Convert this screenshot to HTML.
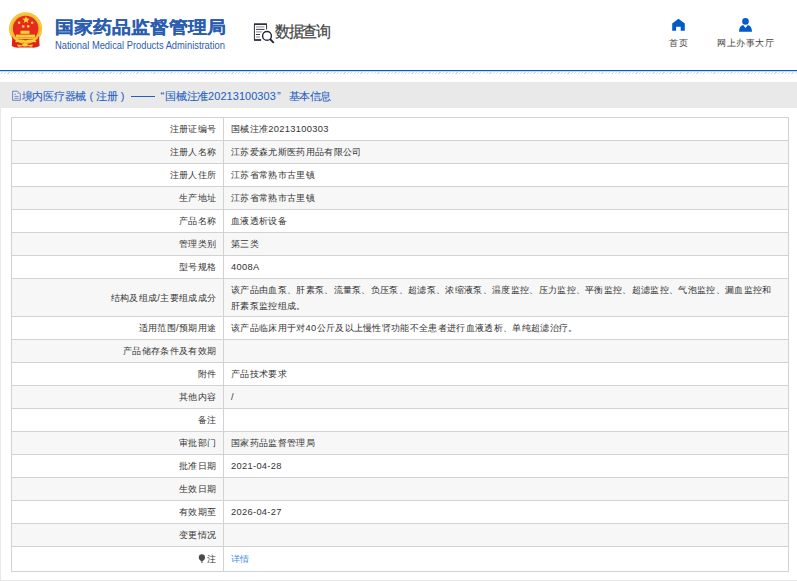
<!DOCTYPE html>
<html><head><meta charset="utf-8">
<style>
*{margin:0;padding:0;box-sizing:border-box}
html,body{width:797px;height:581px;overflow:hidden;background:#fff;font-family:"Liberation Sans",sans-serif;color:#333}
.abs{position:absolute}
#hdr{position:absolute;left:0;top:0;width:797px;height:70px;background:#fff}
#title{left:54.5px;top:16.5px;font-size:19px;font-weight:700;letter-spacing:0px;transform:scaleY(0.9);transform-origin:0 0;-webkit-text-stroke:0.15px #2a5db0;color:#2a5db0;white-space:nowrap;letter-spacing:0px;line-height:24px}
#eng{left:54.5px;top:38.5px;font-size:10.5px;transform:scaleX(0.89);color:#2a5db0;white-space:nowrap;line-height:12px;transform-origin:0 0}
#sj{left:275px;top:19.5px;font-size:15px;letter-spacing:-1.3px;color:#444;-webkit-text-stroke:0.2px #444;transform:scaleY(1.06);transform-origin:0 0;white-space:nowrap;line-height:22px}
.nav{font-size:9.3px;letter-spacing:0.5px;color:#444;white-space:nowrap;line-height:12px}
#bline{left:0;top:70px;width:797px;height:1px;background:#005ac8;box-shadow:0 0.6px 0 rgba(0,90,200,0.35)}
#hatch{left:0;top:72px;width:797px;height:2px;background:repeating-linear-gradient(135deg,#fff 0 1.5px,#dcdcdc 1.5px 2.4px)}
#graybg{left:0;top:82px;width:797px;height:499px;background:#e9e9e9}
.c{position:absolute;top:0}
#crumb{left:21.5px;-webkit-text-stroke:0.08px #1f5fc6;top:88px;font-size:10.9px;color:#1f5fc6;white-space:nowrap;line-height:16px}
#box{left:1px;top:108px;width:796px;height:472px;background:#fff}
table{position:absolute;left:11px;top:117px;width:778px;border-collapse:collapse;font-size:9.3px;color:#333}
td{border:1px solid #d2d2d2;height:23px;padding:2px 7px 0 7px;line-height:15.6px;white-space:nowrap;letter-spacing:0.32px}
td.l{width:212px;text-align:right;padding-right:6.8px}
tr:nth-child(even) td{background:#f7f7f7}
</style></head><body>
<div id="hdr">
  <svg class="abs" style="left:6px;top:10px" width="40" height="40" viewBox="0 0 40 40">
    <circle cx="19.6" cy="18.9" r="16.6" fill="#f1bf2e"/>
    <circle cx="19.6" cy="18.9" r="15.6" fill="none" stroke="#f6d04a" stroke-width="1"/>
    <circle cx="19.65" cy="18.6" r="12.8" fill="#e8291f"/>
    <path d="M6.3 26 Q9 33 19.6 34 Q30 33 33 26 L33.6 36 Q30 38 26 37.6 L13 37.6 Q9 38 5.8 36Z" fill="#dc2418"/>
    <g fill="#f8d23a">
      <polygon points="20,6.2 21.05,8.6 23.6,8.75 21.7,10.4 22.3,12.9 20,11.5 17.7,12.9 18.3,10.4 16.4,8.75 18.95,8.6"/>
      <circle cx="13.1" cy="12.7" r="1.3"/><circle cx="26.2" cy="12.7" r="1.3"/>
      <circle cx="17.2" cy="16.4" r="1.3"/><circle cx="22.2" cy="16.4" r="1.3"/>
      <rect x="14.5" y="20.7" width="9" height="3.1"/>
      <rect x="10" y="24.6" width="19" height="2.9"/>
      <rect x="7.5" y="27.5" width="24" height="1.5" fill="#f4c52c"/>
      <path d="M9 31 Q14 28.5 19.6 30.5 Q25 28.5 30.5 31 L29.5 32.5 Q25 30.5 19.6 32.3 Q14 30.5 10 32.5Z"/>
      <ellipse cx="19" cy="35" rx="3" ry="1.6"/>
      <path d="M11 34.5 L16 35.3 L16 36.3 L12 36.8Z M27 34.5 L22 35.3 L22 36.3 L26 36.8Z"/>
    </g>
  </svg>
  <div id="title" class="abs">国家药品监督管理局</div>
  <div id="eng" class="abs">National Medical Products Administration</div>
  <svg class="abs" style="left:250px;top:20px" width="28" height="26" viewBox="0 0 28 26">
    <path d="M11.2 20 H4.4 V4.2 H16.6 V9.4" fill="none" stroke="#2e2e3e" stroke-width="1"/>
    <rect x="4" y="3.4" width="13" height="1.6" fill="#2e2e3e"/>
    <rect x="4" y="19.2" width="7" height="1.6" fill="#2e2e3e"/>
    <rect x="6" y="6.4" width="8.5" height="1" fill="#8a8a96"/>
    <rect x="6" y="8.9" width="8.5" height="1" fill="#3a3a4a"/>
    <rect x="6" y="11.4" width="6" height="1" fill="#8a8a96"/>
    <rect x="6" y="14" width="4" height="1" fill="#3a3a4a"/>
    <rect x="6" y="16.5" width="4" height="1" fill="#8a8a96"/>
    <circle cx="17" cy="15.9" r="4.4" fill="#fff" stroke="#262636" stroke-width="1.4"/>
    <line x1="20" y1="19" x2="23.8" y2="22.8" stroke="#262636" stroke-width="1.9"/>
  </svg>
  <div id="sj" class="abs">数据查询</div>
  <svg class="abs" style="left:672px;top:18px" width="13" height="13" viewBox="0 0 13 13">
    <path d="M6.5 0.8 L12.8 5.5 V12.8 H8.7 V8.8 H4.1 V12.8 H0.2 V5.5Z" fill="#005ac8"/>
  </svg>
  <div class="abs nav" style="left:669px;top:37px">首页</div>
  <svg class="abs" style="left:738px;top:17px" width="15" height="15" viewBox="0 0 15 15">
    <circle cx="7.5" cy="4.4" r="3.3" fill="#005ac8"/>
    <path d="M1 14.8 Q1.2 8.6 5.2 8 L7.5 11 L9.8 8 Q13.8 8.6 14 14.8Z" fill="#005ac8"/>
  </svg>
  <div class="abs nav" style="left:717px;top:37px">网上办事大厅</div>
</div>
<div id="bline" class="abs"></div>
<div id="hatch" class="abs"></div>
<div id="graybg" class="abs"></div>
<svg class="abs" style="left:11px;top:90px" width="12" height="13" viewBox="0 0 12 13">
  <path d="M1.6 1.2 H6.6 L9.3 3.9 V10.3 H1.6Z" fill="none" stroke="#4a6cc8" stroke-width="0.8"/>
  <circle cx="7" cy="3.4" r="0.7" fill="#8aa0e0"/>
  <line x1="3.4" y1="4.3" x2="5" y2="4.3" stroke="#4a6cc8" stroke-width="0.7"/>
  <line x1="3.4" y1="6.4" x2="7.6" y2="6.4" stroke="#4a6cc8" stroke-width="0.7"/>
  <line x1="3.4" y1="8.3" x2="7.6" y2="8.3" stroke="#4a6cc8" stroke-width="0.7"/>
</svg>
<div id="crumb" class="abs"><span class="c" style="left:0;letter-spacing:-0.25px">境内医疗器械</span><span class="c" style="left:68px">(</span><span class="c" style="left:74.3px;letter-spacing:-0.25px">注册</span><span class="c" style="left:99.3px">)</span><span class="c" style="left:109.8px;top:7.6px;width:23.5px;height:1px;background:#1f5fc6"></span><span class="c" style="left:139px">“</span><span class="c" style="left:143.8px;letter-spacing:-0.35px">国械注准</span><span class="c" style="left:186.6px;letter-spacing:0.1px">20213100303</span><span class="c" style="left:255.5px">”</span><span class="c" style="left:267.2px;letter-spacing:-0.4px">基本信息</span></div>
<div id="box" class="abs"></div>
<table>
<tr><td class="l">注册证编号</td><td>国械注准20213100303</td></tr>
<tr><td class="l">注册人名称</td><td>江苏爱森尤斯医药用品有限公司</td></tr>
<tr><td class="l">注册人住所</td><td>江苏省常熟市古里镇</td></tr>
<tr><td class="l">生产地址</td><td>江苏省常熟市古里镇</td></tr>
<tr><td class="l">产品名称</td><td>血液透析设备</td></tr>
<tr><td class="l">管理类别</td><td>第三类</td></tr>
<tr><td class="l">型号规格</td><td>4008A</td></tr>
<tr><td class="l" style="height:38px">结构及组成/主要组成成分</td><td>该产品由血泵、肝素泵、流量泵、负压泵、超滤泵、浓缩液泵、温度监控、压力监控、平衡监控、超滤监控、气泡监控、漏血监控和<br>肝素泵监控组成。</td></tr>
<tr><td class="l">适用范围/预期用途</td><td>该产品临床用于对40公斤及以上慢性肾功能不全患者进行血液透析、单纯超滤治疗。</td></tr>
<tr><td class="l">产品储存条件及有效期</td><td></td></tr>
<tr><td class="l">附件</td><td>产品技术要求</td></tr>
<tr><td class="l">其他内容</td><td>/</td></tr>
<tr><td class="l">备注</td><td></td></tr>
<tr><td class="l">审批部门</td><td>国家药品监督管理局</td></tr>
<tr><td class="l">批准日期</td><td>2021-04-28</td></tr>
<tr><td class="l">生效日期</td><td></td></tr>
<tr><td class="l">有效期至</td><td>2026-04-27</td></tr>
<tr><td class="l">变更情况</td><td></td></tr>
<tr><td class="l" style="height:25px">注</td><td style="color:#3a8ee6">详情</td></tr>
</table>
<svg class="abs" style="left:197px;top:553px" width="10" height="11" viewBox="0 0 10 11">
  <circle cx="4.9" cy="4.4" r="3.1" fill="#4a4a4e"/>
  <path d="M3.2 6 L6.6 6 L5.9 8.4 L3.9 8.4Z" fill="#4a4a4e"/>
  <rect x="3.9" y="8.8" width="2" height="1.2" fill="#9a9a9e"/>
</svg>
</body></html>
